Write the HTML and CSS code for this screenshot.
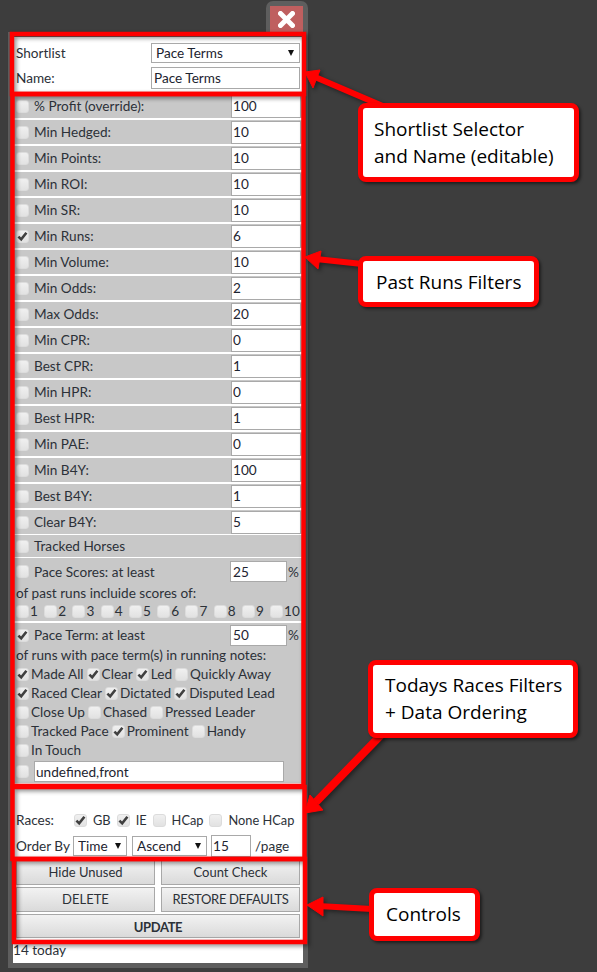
FILE: index.html
```html
<!DOCTYPE html>
<html lang="en">
<head>
    <meta charset="UTF-8">
    <meta name="viewport" content="width=device-width, initial-scale=1.0">
    <title>Shortlist Editor</title>
    <link rel="stylesheet" href="styles.css">
</head>
<body>
    <div class="close-tab">
        <button type="button" class="close-button" aria-label="Close">
            <svg width="17" height="17" viewBox="0 0 17 17"><path d="M2.5 2.5 L14.5 14.5 M14.5 2.5 L2.5 14.5" stroke="#fff" stroke-width="5" stroke-linecap="round"/></svg>
        </button>
    </div>

    <div class="panel">
        <div class="shortlist">
            <div class="name-row">
                <label>Shortlist</label>
                <div class="select select-wide"><select><option>Pace Terms</option></select></div>
            </div>
            <div class="name-row">
                <label>Name:</label>
                <input type="text" class="name-input" value="Pace Terms">
            </div>
        </div>

        <div class="filters">
            <div class="row"><input type="checkbox" class="check"><label>% Profit (override):</label><input type="text" class="num" value="100"></div>
            <div class="row"><input type="checkbox" class="check"><label>Min Hedged:</label><input type="text" class="num" value="10"></div>
            <div class="row"><input type="checkbox" class="check"><label>Min Points:</label><input type="text" class="num" value="10"></div>
            <div class="row"><input type="checkbox" class="check"><label>Min ROI:</label><input type="text" class="num" value="10"></div>
            <div class="row"><input type="checkbox" class="check"><label>Min SR:</label><input type="text" class="num" value="10"></div>
            <div class="row"><input type="checkbox" class="check" checked><label>Min Runs:</label><input type="text" class="num" value="6"></div>
            <div class="row"><input type="checkbox" class="check"><label>Min Volume:</label><input type="text" class="num" value="10"></div>
            <div class="row"><input type="checkbox" class="check"><label>Min Odds:</label><input type="text" class="num" value="2"></div>
            <div class="row"><input type="checkbox" class="check"><label>Max Odds:</label><input type="text" class="num" value="20"></div>
            <div class="row"><input type="checkbox" class="check"><label>Min CPR:</label><input type="text" class="num" value="0"></div>
            <div class="row"><input type="checkbox" class="check"><label>Best CPR:</label><input type="text" class="num" value="1"></div>
            <div class="row"><input type="checkbox" class="check"><label>Min HPR:</label><input type="text" class="num" value="0"></div>
            <div class="row"><input type="checkbox" class="check"><label>Best HPR:</label><input type="text" class="num" value="1"></div>
            <div class="row"><input type="checkbox" class="check"><label>Min PAE:</label><input type="text" class="num" value="0"></div>
            <div class="row"><input type="checkbox" class="check"><label>Min B4Y:</label><input type="text" class="num" value="100"></div>
            <div class="row"><input type="checkbox" class="check"><label>Best B4Y:</label><input type="text" class="num" value="1"></div>
            <div class="row"><input type="checkbox" class="check"><label>Clear B4Y:</label><input type="text" class="num" value="5"></div>
            <div class="row row-short"><input type="checkbox" class="check"><label>Tracked Horses</label></div>

            <div class="group group-scores">
                <div class="group-head"><input type="checkbox" class="check"><label>Pace Scores: at least</label><input type="text" class="pct" value="25"><span>%</span></div>
                <div class="note">of past runs incluide scores of:</div>
                <div class="scores">
                    <span class="opt"><input type="checkbox" class="check">1</span>
                    <span class="opt"><input type="checkbox" class="check">2</span>
                    <span class="opt"><input type="checkbox" class="check">3</span>
                    <span class="opt"><input type="checkbox" class="check">4</span>
                    <span class="opt"><input type="checkbox" class="check">5</span>
                    <span class="opt"><input type="checkbox" class="check">6</span>
                    <span class="opt"><input type="checkbox" class="check">7</span>
                    <span class="opt"><input type="checkbox" class="check">8</span>
                    <span class="opt"><input type="checkbox" class="check">9</span>
                    <span class="opt"><input type="checkbox" class="check">10</span>
                </div>
            </div>

            <div class="group group-terms">
                <div class="group-head"><input type="checkbox" class="check" checked><label>Pace Term: at least</label><input type="text" class="pct" value="50"><span>%</span></div>
                <div class="note note-terms">of runs with pace term(s) in running notes:</div>
                <div class="terms">
                    <span class="opt"><input type="checkbox" class="check" checked>Made All</span>
                    <span class="opt"><input type="checkbox" class="check" checked>Clear</span>
                    <span class="opt"><input type="checkbox" class="check" checked>Led</span>
                    <span class="opt"><input type="checkbox" class="check">Quickly Away</span>
                </div>
                <div class="terms">
                    <span class="opt"><input type="checkbox" class="check" checked>Raced Clear</span>
                    <span class="opt"><input type="checkbox" class="check" checked>Dictated</span>
                    <span class="opt"><input type="checkbox" class="check" checked>Disputed Lead</span>
                </div>
                <div class="terms">
                    <span class="opt"><input type="checkbox" class="check">Close Up</span>
                    <span class="opt"><input type="checkbox" class="check">Chased</span>
                    <span class="opt"><input type="checkbox" class="check">Pressed Leader</span>
                </div>
                <div class="terms">
                    <span class="opt"><input type="checkbox" class="check">Tracked Pace</span>
                    <span class="opt"><input type="checkbox" class="check" checked>Prominent</span>
                    <span class="opt"><input type="checkbox" class="check">Handy</span>
                </div>
                <div class="terms">
                    <span class="opt"><input type="checkbox" class="check">In Touch</span>
                </div>
                <div class="custom-row"><input type="checkbox" class="check"><input type="text" class="custom" value="undefined,front"></div>
            </div>
        </div>

        <div class="races">
            <div class="races-row">
                <label class="races-label">Races:</label>
                <span class="race"><input type="checkbox" class="check" checked>GB</span>
                <span class="race"><input type="checkbox" class="check" checked>IE</span>
                <span class="race"><input type="checkbox" class="check">HCap</span>
                <span class="race"><input type="checkbox" class="check">None HCap</span>
            </div>
            <div class="order-row">
                <label class="order-label">Order By</label>
                <div class="select select-time"><select><option>Time</option></select></div>
                <div class="select select-dir"><select><option>Ascend</option></select></div>
                <input type="text" class="per-page" value="15">
                <span>/page</span>
            </div>
        </div>

        <div class="controls">
            <button type="button" class="top-btn">Hide Unused</button>
            <button type="button" class="top-btn">Count Check</button>
            <button type="button" class="top-btn">DELETE</button>
            <button type="button" class="top-btn restore">RESTORE DEFAULTS</button>
            <button type="button" class="update">UPDATE</button>
        </div>

        <div class="today">14 today</div>
    </div>

    <!-- annotations drawn on top of the screenshot -->
    <svg class="marks" width="597" height="972" viewBox="0 0 597 972">
        <g fill="none" stroke="#f00" stroke-width="4.5">
            <rect x="12" y="34" width="292" height="60"/>
            <rect x="12.5" y="94" width="291" height="692"/>
            <rect x="12.5" y="787" width="292" height="72"/>
            <rect x="14" y="859" width="291" height="83"/>
        </g>
        <g fill="#f00" stroke="#f00" stroke-linejoin="round">
            <line x1="315" y1="77" x2="385" y2="107" stroke-width="6"/>
            <polygon points="305,72 320,70 313,88" stroke-width="1"/>
            <line x1="316" y1="259" x2="362" y2="264" stroke-width="6"/>
            <polygon points="305,257 321,251 318,269" stroke-width="1"/>
            <line x1="316" y1="802" x2="382" y2="734" stroke-width="8"/>
            <polygon points="305,813 323,810 310,795" stroke-width="1"/>
            <line x1="318" y1="906" x2="372" y2="909" stroke-width="6"/>
            <polygon points="307,905 323,897 323,916" stroke-width="1"/>
        </g>
    </svg>
    <div class="callout callout-shortlist">Shortlist Selector<br>and Name (editable)</div>
    <div class="callout callout-past">Past Runs Filters</div>
    <div class="callout callout-today">Todays Races Filters<br>+ Data Ordering</div>
    <div class="callout callout-controls">Controls</div>
</body>
</html>
```

FILE: styles.css
```css
html, body {
    margin: 0;
    height: 972px;
    overflow: hidden;
}
body {
    position: relative;
    background-color: #3d3d3d;
    font-family: Lato, "Open Sans", sans-serif;
    font-size: 13.6px;
    color: #2c3138;
}

/* close button sits on a tab above the panel */
.close-tab {
    width: 42px;
    height: 31px;
    margin: 1px 0 0 266px;
    box-sizing: border-box;
    padding: 5px 5px 0 4px;
    background-color: #5e5e5e;
    border-radius: 7px 7px 0 0;
}
.close-button {
    display: flex;
    align-items: center;
    justify-content: center;
    width: 33px;
    height: 26px;
    padding: 0;
    border: none;
    background-color: #bf5f5f;
}

.panel {
    width: 290px;
    margin-left: 8px;
    border: 5px solid #5e5e5e;
    background-color: #fff;
}

input[type="text"], select {
    font-family: Lato, "Open Sans", sans-serif;
    font-size: 13.6px;
    color: #1d2430;
    background-color: #fff;
    border: 1px solid #a9a9a9;
    box-sizing: border-box;
    outline: none;
}

/* top section */
.shortlist {
    height: 57px;
    padding-top: 4px;
    box-sizing: border-box;
}
.name-row {
    display: flex;
    align-items: center;
    justify-content: space-between;
    height: 24px;
    padding: 0 3px;
}
.name-row + .name-row {
    margin-top: 1px;
}
.name-input {
    width: 149px;
    height: 22px;
    padding: 0 2px;
}

/* select with drawn arrow */
.select {
    position: relative;
    flex: none;
}
.select select {
    width: 100%;
    height: 100%;
    appearance: none;
    -webkit-appearance: none;
    border-radius: 0;
    padding: 0 4px;
}
.select::after {
    content: "";
    position: absolute;
    right: 6px;
    top: 7px;
    border-left: 3.5px solid transparent;
    border-right: 3.5px solid transparent;
    border-top: 6px solid #111;
}
.select-wide {
    width: 149px;
    height: 20px;
}

/* filter rows */
.filters {
    width: 290px;
    height: 692px;
}
.row, .group {
    background-color: #c8c8c8;
    margin-bottom: 2px;
}
.row {
    display: flex;
    align-items: center;
    height: 24px;
    padding-left: 3px;
}
.row label {
    flex: 1;
    margin-left: 5px;
}
.row.row-short {
    height: 22px;
    margin-top: -1px;
    margin-bottom: 1px;
}
.num {
    width: 70px;
    height: 23px;
    margin-right: 2px;
    padding: 0 1px;
}

.check {
    appearance: none;
    -webkit-appearance: none;
    flex: none;
    width: 13px;
    height: 13px;
    margin: 0;
    background: linear-gradient(#f0f0f0, #e2e2e2) no-repeat center;
    border: 1px solid #dcdcdc;
    border-radius: 3px;
    box-sizing: border-box;
    vertical-align: -2px;
}
.check:checked {
    background-image: url("data:image/svg+xml,%3Csvg xmlns='http://www.w3.org/2000/svg' width='11' height='11'%3E%3Cpath d='M1.4 5.6 L4.2 8.4 L9.4 1.8' fill='none' stroke='%23404040' stroke-width='2.6'/%3E%3C/svg%3E"), linear-gradient(#f0f0f0, #e2e2e2);
}

.group {
    padding: 0 3px;
}
.group-scores {
    height: 63px;
}
.group-terms {
    height: 160px;
    margin-bottom: 0;
}
.group-head {
    display: flex;
    align-items: center;
    height: 24px;
}
.group-scores .group-head {
    height: 25px;
    padding-top: 1px;
}
.group-head label {
    flex: 1;
    margin-left: 5px;
}
.pct {
    width: 57px;
    height: 21px;
    padding: 0 2px;
}
.group-head span {
    width: 12px;
    margin-left: 1px;
}
.note {
    height: 18px;
    line-height: 18px;
}
.note-terms {
    line-height: 16px;
}
.scores {
    display: flex;
    justify-content: space-between;
    height: 19px;
    line-height: 18px;
}
.scores .opt .check {
    margin-right: 1px;
}
.terms {
    display: flex;
    gap: 3px;
    height: 19px;
    line-height: 19px;
}
.opt .check {
    margin-right: 2px;
}
.custom-row {
    display: flex;
    align-items: center;
    height: 23px;
}
.custom {
    width: 250px;
    height: 21px;
    margin-left: 5px;
    padding: 0 1px;
}

/* todays races */
.races {
    height: 71px;
    padding: 25px 3px 0;
    box-sizing: border-box;
}
.races-row {
    display: flex;
    align-items: center;
    height: 18px;
    white-space: nowrap;
}
.races-label {
    flex: none;
    width: 58px;
}
.race {
    display: inline-flex;
    align-items: center;
    margin-right: 6px;
    font-size: 12.8px;
}
.race .check {
    margin-right: 6px;
}
.order-row {
    display: flex;
    align-items: center;
    height: 21px;
    margin-top: 6px;
}
.order-label {
    flex: none;
    width: 57px;
}
.select-time {
    width: 54px;
    height: 20px;
}
.select-dir {
    width: 75px;
    height: 20px;
    margin-left: 5px;
}
.per-page {
    width: 40px;
    height: 22px;
    margin-left: 4px;
    margin-right: 4px;
    padding: 0 1px;
}

/* buttons */
.controls {
    display: grid;
    grid-template-columns: 139px 139px;
    grid-auto-rows: 25px;
    column-gap: 6px;
    row-gap: 2px;
    padding: 3px 3px 0;
    height: 87px;
    box-sizing: border-box;
}
.controls button {
    font-family: Lato, "Open Sans", sans-serif;
    font-size: 13px;
    color: #2c3138;
    background: linear-gradient(#f2f2f2, #dadada);
    border: 1px solid #a8a8a8;
    padding: 0;
}
.controls .top-btn {
    padding-bottom: 2px;
}
.controls .restore {
    letter-spacing: -0.35px;
}
.controls .update {
    grid-column: 1 / 3;
    font-weight: bold;
    letter-spacing: -0.4px;
    padding-top: 1px;
    height: 24px;
}
.today {
    height: 19px;
    line-height: 12px;
}

/* annotations */
.marks {
    position: absolute;
    left: 0;
    top: 0;
    filter: drop-shadow(2px 2px 2px rgba(0, 0, 0, 0.45));
}
.callout {
    position: absolute;
    box-sizing: border-box;
    background-color: #fff;
    border: 5px solid #f00;
    border-radius: 8px;
    box-shadow: 2px 2px 3px rgba(0, 0, 0, 0.5);
    font-family: "Open Sans", sans-serif;
    font-size: 19px;
    line-height: 27px;
    color: #000;
}
.callout-shortlist {
    left: 358px;
    top: 103px;
    width: 221px;
    height: 79px;
    padding: 8px 0 0 11px;
}
.callout-past {
    left: 358px;
    top: 256px;
    width: 181px;
    height: 51px;
    padding: 8px 0 0 13px;
}
.callout-today {
    left: 368px;
    top: 660px;
    width: 210px;
    height: 78px;
    padding: 7px 0 0 12px;
}
.callout-controls {
    left: 369px;
    top: 888px;
    width: 111px;
    height: 53px;
    padding: 8px 0 0 12px;
}
```
